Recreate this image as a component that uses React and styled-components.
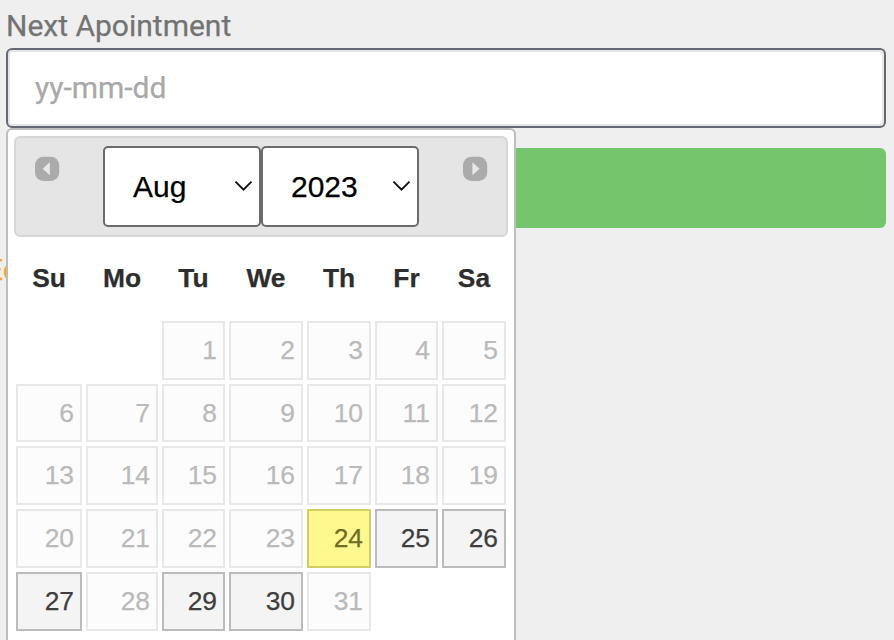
import React, {useState} from 'react'
import styled, { createGlobalStyle } from 'styled-components'

const GlobalStyle = createGlobalStyle`
    * {
        box-sizing: border-box;
    }
    body {
        margin: 0;
        background: #efefef;
        overflow: hidden;
    }
`
const Page = styled.div`
    height: 640px;
    padding: 7px 8px 0 6px;
    overflow: hidden;
    font-family: Roboto, sans-serif;
    font-size: 30px;
    -webkit-text-stroke: 0.25px;
`
const Label = styled.label`
    display: block;
    height: 41px;
    line-height: 38px;
    color: #737373;
    white-space: nowrap;
`
const Field = styled.div`
    position: relative;
    height: 80px;
    margin-bottom: 20px;
`
const DateInput = styled.input`
    display: block;
    width: 100%;
    height: 80px;
    padding: 0 28px 2px 27px;
    border: 2px solid #656877;
    border-radius: 6px;
    outline: none;
    background: #fff;
    box-shadow: inset 0 0 0 2px #e5e5e5;
    font-family: Roboto, sans-serif;
    font-size: 30px;
    color: #444;

    &::placeholder {
        color: #a9a9a9;
        opacity: 1;
    }
`
const Submit = styled.button`
    display: block;
    width: 100%;
    height: 80px;
    border: 0;
    border-radius: 6px;
    background: #74c56c;
`
const Warning = styled.p`
    margin: 24px 0 0 -20px;
    line-height: 36px;
    color: #f5a623;
`
const Picker = styled.div`
    position: absolute;
    top: 80px;
    left: 0;
    width: 510px;
    height: 560px;
    padding: 6px;
    border: 2px solid #bdbdbd;
    border-radius: 6px;
    background: #fff;
    font-family: "Liberation Sans", Arial, sans-serif;
    font-size: 26.4px;
`
const PickerHeader = styled.div`
    display: flex;
    justify-content: space-between;
    height: 101px;
    padding: 8px 18px 0;
    border: 2px solid #d6d6d6;
    border-radius: 6px;
    background: #e5e5e5;
`
const Selects = styled.div`
    display: flex;
`
const SelectBox = styled.div`
    display: grid;
    width: 158px;
    height: 81px;

    & > * {
        grid-area: 1 / 1;
    }
`
const Select = styled.select`
    appearance: none;
    width: 100%;
    height: 100%;
    padding: 0 26px 0 28px;
    border: 2px solid #6b6b6b;
    border-radius: 5px;
    background: #fff;
    color: #000;
    font-family: "Liberation Sans", Arial, sans-serif;
    font-size: 30px;
`
const Chevron = styled.svg`
    align-self: center;
    justify-self: end;
    margin: 0 8px 2px 0;
    pointer-events: none;
`
const ArrowButton = styled.button`
    width: 26px;
    height: 26px;
    margin-top: 10px;
    padding: 0;
    border: 0;
    background: none;

    svg {
        display: block;
    }
`
const Weekdays = styled.div`
    display: grid;
    grid-template-columns: 66px 72px 63px 74px 64px 63px 64px;
    column-gap: 4px;
    height: 84px;
    padding: 0 2px;
    line-height: 82px;
    font-weight: bold;
    text-align: center;
    color: #2e2e2e;
`
const Days = styled.div`
    display: grid;
    grid-template-columns: 66px 72px 63px 74px 64px 63px 64px;
    grid-template-rows: 59px 58px 59px 59px 59px;
    gap: 4px;
    padding: 0 2px;
`
const colours = {
    off: ['#e8e8e8', '#fcfcfc', '#bababa'],
    open: ['#bbbbbb', '#f4f4f4', '#3e3e3e'],
    today: ['#d3ce62', '#fef88f', '#6f6d28'],
}
const Day = styled.div`
    grid-column-start: ${props => props.$start || 'auto'};
    padding-right: 6px;
    border: 2px solid ${props => colours[props.$kind][0]};
    background: ${props => colours[props.$kind][1]};
    color: ${props => colours[props.$kind][2]};
    line-height: 54px;
    text-align: right;
`

const weekdays = ['Su', 'Mo', 'Tu', 'We', 'Th', 'Fr', 'Sa']
const days = Array.from({length: 31}, (_, i) => i + 1)
const openDays = [25, 26, 27, 29, 30]

const dayKind = day => {
    if (day === 24) return 'today'
    return openDays.includes(day) ? 'open' : 'off'
}

const Arrow = ({next}) => (
    <svg width="26" height="26" viewBox="0 0 26 26">
        <rect x="1" y="0.8" width="24.2" height="24.2" rx="8.5" fill="#ababab" />
        <path d={next ? 'M10.4 6.2L17.6 12.7L10.4 19.2Z' : 'M15.8 6.2L8.6 12.7L15.8 19.2Z'} fill="#e8e8e8" />
    </svg>
)

const Dropdown = ({value, options, onChange, label}) => (
    <SelectBox>
        <Select aria-label={label} value={value} onChange={e => onChange(e.target.value)}>
            {options.map(option => <option key={option}>{option}</option>)}
        </Select>
        <Chevron width="19" height="12" viewBox="0 0 19 12">
            <path d="M1.5 1.6L9.5 9.6L17.5 1.6" fill="none" stroke="#111" strokeWidth="1.9" />
        </Chevron>
    </SelectBox>
)

const App = () => {

    const [month, setMonth] = useState('Aug')
    const [year, setYear] = useState('2023')

    return (
        <Page>
            <GlobalStyle />
            <Label htmlFor="next">Next Apointment</Label>
            <Field>
                <DateInput id="next" type="text" placeholder="yy-mm-dd" />
                <Picker>
                    <PickerHeader>
                        <ArrowButton aria-label="Prev"><Arrow /></ArrowButton>
                        <Selects>
                            <Dropdown label="Month" value={month} onChange={setMonth} options={['Aug', 'Sep', 'Oct']} />
                            <Dropdown label="Year" value={year} onChange={setYear} options={['2023', '2024']} />
                        </Selects>
                        <ArrowButton aria-label="Next"><Arrow next /></ArrowButton>
                    </PickerHeader>
                    <Weekdays>
                        {weekdays.map(name => <span key={name}>{name}</span>)}
                    </Weekdays>
                    <Days>
                        {days.map(day => (
                            <Day key={day} $kind={dayKind(day)} $start={day === 1 ? 3 : undefined}>{day}</Day>
                        ))}
                    </Days>
                </Picker>
            </Field>
            <Submit aria-label="Save" />
            <Warning>Ec</Warning>
        </Page>
    )
}

export default App
